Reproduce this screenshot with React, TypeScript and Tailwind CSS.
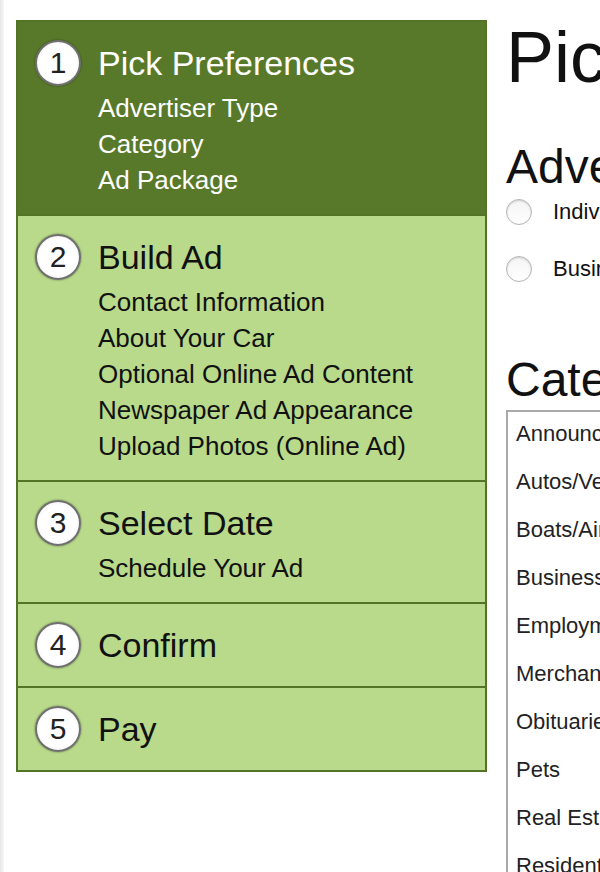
import React from 'react';

const steps = [
  { num: 1, title: 'Pick Preferences', items: ['Advertiser Type', 'Category', 'Ad Package'], active: true },
  {
    num: 2,
    title: 'Build Ad',
    items: ['Contact Information', 'About Your Car', 'Optional Online Ad Content', 'Newspaper Ad Appearance', 'Upload Photos (Online Ad)'],
  },
  { num: 3, title: 'Select Date', items: ['Schedule Your Ad'] },
  { num: 4, title: 'Confirm', items: [] as string[] },
  { num: 5, title: 'Pay', items: [] as string[] },
];

const categories = [
  'Announcements',
  'Autos/Vehicles',
  'Boats/Aircraft',
  'Business Opportunities',
  'Employment',
  'Merchandise',
  'Obituaries',
  'Pets',
  'Real Estate',
  'Residential Rentals',
  'Services',
];

const StepCircle = ({ num }: { num: number }) => (
  <div className="flex h-[46px] w-[46px] shrink-0 items-center justify-center rounded-full border-2 border-[#6f6f6f] bg-[radial-gradient(circle,#ffffff_60%,#e4e4e4_100%)] shadow-[0_0_2px_rgba(0,0,0,0.5)]">
    <span className="text-[30px] leading-none text-[#222]">{num}</span>
  </div>
);

const App = () => {
  return (
    <div className="flex h-[872px] w-[600px] overflow-hidden bg-white font-['Liberation_Sans',Arial,sans-serif]">
      {/* left edge shade */}
      <div className="w-[4px] shrink-0 bg-gradient-to-r from-[#e6e6e6] to-[#f7f7f7]" />

      {/* Steps sidebar */}
      <div className="ml-[12px] mt-[20px] w-[471px] shrink-0 self-start border-2 border-[#537326]">
        {steps.map((step, i) => (
          <div
            key={step.num}
            className={`${step.active ? 'bg-[#58792a] text-white' : 'bg-[#b8da8a] text-[#111]'} ${
              i < steps.length - 1 ? 'border-b-2 border-[#537326]' : ''
            } pl-[17px] pt-[18px] ${step.items.length ? 'pb-[16px]' : 'pb-[18px]'}`}
          >
            <div className="flex h-[46px] items-center gap-[17px]">
              <StepCircle num={step.num} />
              <span className="text-[34px] leading-none">{step.title}</span>
            </div>
            {step.items.length > 0 && (
              <ul className="mt-[4px] pl-[63px]">
                {step.items.map((item) => (
                  <li key={item} className="text-[26px] leading-[36px]">
                    {item}
                  </li>
                ))}
              </ul>
            )}
          </div>
        ))}
      </div>

      {/* Main content */}
      <div className="ml-[19px] shrink-0 whitespace-nowrap text-[#111]">
        <h1 className="mt-[21px] text-[72px] leading-none">Pick Preferences</h1>

        <h2 className="mt-[50px] text-[48px] leading-none">Advertiser Type</h2>
        <div className="mt-[8px] flex flex-col gap-[31px]">
          {['Individual', 'Business'].map((label) => (
            <label key={label} className="flex items-center gap-[21px]">
              <span className="h-[26px] w-[26px] rounded-full border border-[#b5b5b5] bg-gradient-to-b from-[#f4f4f4] to-white shadow-[inset_0_1px_2px_rgba(0,0,0,0.15)]" />
              <span className="text-[22px] leading-none">{label}</span>
            </label>
          ))}
        </div>

        <h2 className="mt-[74px] text-[48px] leading-none">Category</h2>
        <div className="mt-[6px] w-[360px] border-2 border-[#a9a9a9] pl-[8px] pt-[10px]">
          {categories.map((c) => (
            <div key={c} className="h-[48px] text-[22px] leading-[24px] text-[#222]">
              {c}
            </div>
          ))}
        </div>
      </div>
    </div>
  );
};

export default App;
